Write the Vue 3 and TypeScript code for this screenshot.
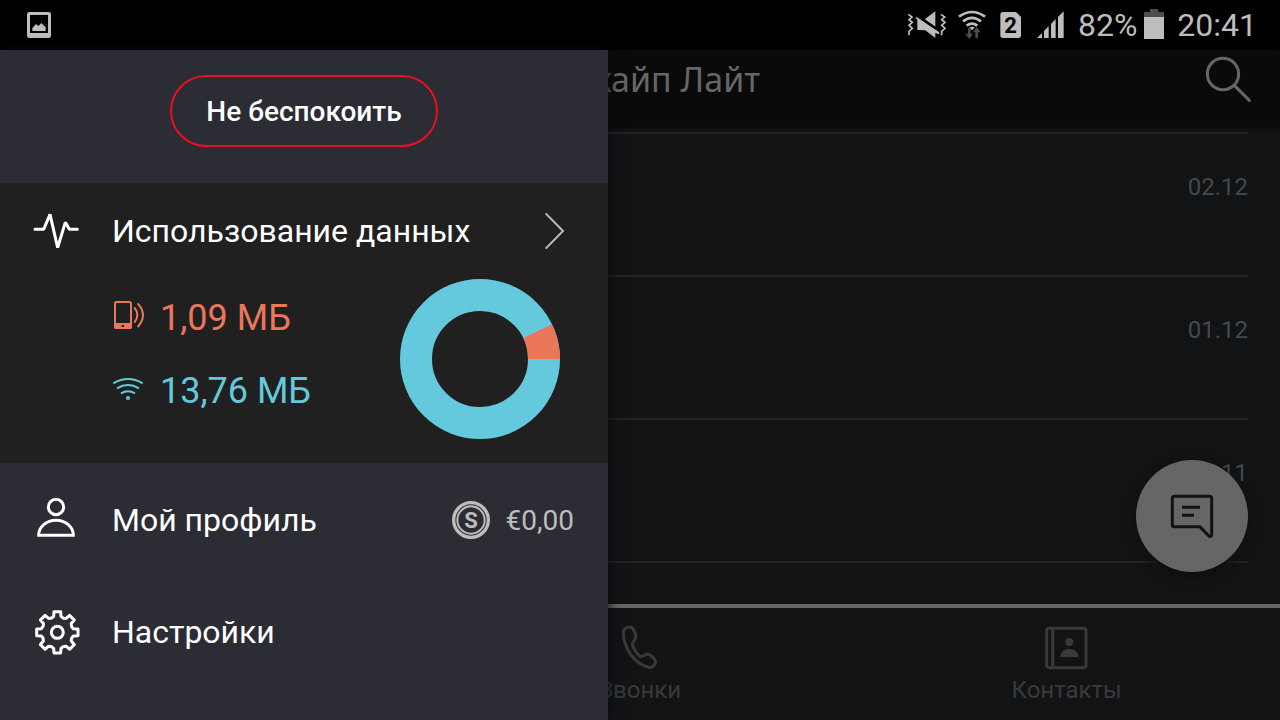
<script setup lang="ts">
interface Usage {
  id: 'mobile' | 'wifi'
  amount: number
  color: string
}

const usage: Usage[] = [
  { id: 'mobile', amount: 1.09, color: '#ea775a' },
  { id: 'wifi', amount: 13.76, color: '#64c9dc' },
]

const dates: string[] = ['02.12', '01.12', '30.11', '']

function formatAmount(value: number): string {
  return value.toFixed(2).replace('.', ',') + ' МБ'
}

// Ring of radius 64 with a 32 wide stroke, the mobile share ends at 3 o'clock.
const ringLength = 2 * Math.PI * 64
const total = usage.reduce((sum, item) => sum + item.amount, 0)
const mobileLength = (usage[0].amount / total) * ringLength
const mobileDash = `0 ${ringLength - mobileLength} ${mobileLength} 0`

// Eight-toothed cog outline around the origin.
function cogPath(): string {
  const tooth: [number, number][] = [
    [-17, -43],
    [-11, -48],
    [-10, -62],
    [10, -62],
    [11, -48],
  ]
  const points: string[] = []
  for (let i = 0; i < 8; i++) {
    const a = (i * Math.PI) / 4
    for (const [x, y] of tooth) {
      const px = x * Math.cos(a) - y * Math.sin(a)
      const py = x * Math.sin(a) + y * Math.cos(a)
      points.push(`${px.toFixed(1)} ${py.toFixed(1)}`)
    }
  }
  return `M${points.join('L')}Z`
}
const cog = cogPath()
</script>

<template>
  <div class="screen">
    <div class="status">
      <svg class="gallery" viewBox="81 36 72 78" aria-hidden="true">
        <path fill="#bdbdbd" fill-rule="evenodd" d="M88 36h58q7 0 7 7v64q0 7-7 7H88q-7 0-7-7V43q0-7 7-7zM90 45v54h54V45z" />
        <path fill="#bdbdbd" d="M97 93V84l11-12 7 6 9-9 13 13v11z" />
      </svg>
      <div class="indicators">
        <svg width="40" height="30" viewBox="48 30 120 90" aria-hidden="true">
          <g fill="none" stroke="#bdbdbd" stroke-width="5">
            <path d="M55 43l11 8-9 8 10 8-10 9 10 9-10 9 0 12" />
            <path d="M153 43l11 8-9 8 10 8-10 9 10 9-10 9 0 12" />
          </g>
          <path fill="#bdbdbd" d="M104 58l32-24v46zM82 90V61q0-4 4-4l63 42-4 4-9-5v16l-30-23zM76 54l4-3 68 46-4 5z" />
          <path stroke="#000" stroke-width="4" d="M92 53l52 35" />
        </svg>
        <svg width="28" height="30" viewBox="204 30 84 90" aria-hidden="true">
          <g fill="none" stroke="#bdbdbd" stroke-width="8">
            <path d="M207 50q39-28 78 0M219 64q27-21 54 0M230 77q16-12 32 0" />
          </g>
          <path fill="#bdbdbd" d="M238 83q8-6 16 0l-8 8z" />
          <path fill="#4d4d4d" d="M234 84h8v17h7l-11 16-13-16h9zM256 114v-17h-7l11-16 12 16h-8v17z" />
        </svg>
        <svg width="26" height="30" viewBox="324 30 78 90" aria-hidden="true">
          <path fill="#bdbdbd" d="M339 36h39l15 15v55q0 8-8 8h-46q-8 0-8-8V44q0-8 8-8z" />
          <text x="362" y="99" text-anchor="middle" class="sim">2</text>
        </svg>
        <svg width="30" height="30" viewBox="438 30 90 90" fill="#bdbdbd" aria-hidden="true">
          <path d="M441 114l15-15v15zM462 93l14-14v35h-14zM483 72l14-15v57h-14zM504 51l17-17v80h-17z" />
        </svg>
        <div class="charge">
          <span>82%</span>
          <svg width="22" height="32" viewBox="759 27 66 96" aria-hidden="true">
            <path fill="#4d4d4d" d="M780 27h24v9h18v17h-60V36h18z" />
            <path fill="#bdbdbd" d="M762 51h60v66h-60z" />
          </svg>
        </div>
        <time>20:41</time>
      </div>
    </div>

    <div class="body">
      <div class="page">
        <header class="header">
          <h1>Скайп Лайт</h1>
          <button class="plain" type="button" aria-label="Поиск">
            <svg width="48" height="48" viewBox="942 165 144 144" fill="none" stroke="#666" stroke-width="9">
              <circle cx="999" cy="222" r="47" />
              <path d="M1033 256l45 45" stroke-linecap="round" />
            </svg>
          </button>
        </header>

        <main class="chats">
          <ul>
            <li v-for="(date, i) in dates" :key="i">
              <time>{{ date }}</time>
            </li>
          </ul>
          <button class="fab" type="button" aria-label="Новый чат">
            <svg width="48" height="48" viewBox="204 156 144 144" fill="none" stroke="#111214" stroke-width="9">
              <path stroke-linejoin="round" d="M223 169h106q6 0 6 6v108q0 8-7 6L299 260h-76q-6 0-6-6v-79q0-6 6-6z" />
              <path d="M246 202h54M246 226h36" />
            </svg>
          </button>
        </main>

        <nav class="tabs">
          <a class="calls" href="#calls">
            <svg width="48" height="48" viewBox="78 192 144 144" fill="none" stroke="#38393a" stroke-width="9" stroke-linejoin="round">
              <path d="M107 205C113 201 122 200 127 204C133 211 139 226 137 234C136 241 127 246 127 252C128 262 142 284 150 289C157 292 165 282 174 283C181 284 192 294 196 302C199 308 192 318 185 322C178 325 163 318 151 311C131 299 113 275 105 249C100 235 100 219 101 213Q102 208 107 205Z" />
            </svg>
            <span>Звонки</span>
          </a>
          <a href="#contacts">
            <svg width="48" height="48" viewBox="188 132 144 144" fill="none" stroke="#38393a" stroke-width="9">
              <rect x="199" y="145" width="118" height="118" rx="7" />
              <path d="M217 145v118" />
              <g fill="#38393a" stroke="none">
                <circle cx="267" cy="186" r="12" />
                <path d="M240 231q2-24 27-24t27 24z" />
              </g>
            </svg>
            <span>Контакты</span>
          </a>
        </nav>
      </div>

      <aside class="drawer">
        <div class="presence">
          <button type="button">Не беспокоить</button>
        </div>

        <section class="usage">
          <a class="row" href="#usage">
            <svg width="48" height="48" viewBox="96 51 144 144" fill="none" stroke="#fff" stroke-width="9" stroke-linecap="round" stroke-linejoin="bevel">
              <path d="M105 118h26l19-45 23 100 23-76 12 21h24" />
            </svg>
            <span class="label">Использование данных</span>
            <svg class="chevron" width="24" height="48" viewBox="612 51 72 144" fill="none" stroke="#bdbdbd" stroke-width="6">
              <path d="M617 70l52 53-52 53" />
            </svg>
          </a>
          <div class="details">
            <ul>
              <li v-for="item in usage" :key="item.id" :class="item.id">
                <svg v-if="item.id === 'mobile'" width="32" height="32" viewBox="336 336 96 96" fill="none" stroke="currentColor" stroke-width="6" overflow="visible">
                  <rect x="345" y="336" width="48" height="78" rx="5" />
                  <path fill="currentColor" stroke="none" d="M342 399h54v12q0 6-6 6h-42q-6 0-6-6z" />
                  <path stroke="#202020" d="M365 408h7" />
                  <path d="M403 352q18 23 0 46M413 340q32 35 0 71" />
                </svg>
                <svg v-else width="32" height="32" viewBox="336 555 96 96" fill="none" stroke="currentColor" stroke-width="6">
                  <path d="M340 580q44-26 88 0M351 595q33-20 66 0M363 610q21-12 42 0" />
                  <circle cx="384" cy="624" r="6" fill="currentColor" stroke="none" />
                </svg>
                <span>{{ formatAmount(item.amount) }}</span>
              </li>
            </ul>
            <svg width="160" height="160" viewBox="-80 -80 160 160" fill="none" stroke-width="32" aria-hidden="true">
              <circle r="64" :stroke="usage[1].color" />
              <circle r="64" :stroke="usage[0].color" :stroke-dasharray="mobileDash" />
            </svg>
          </div>
        </section>

        <nav class="menu">
          <a class="row" href="#profile">
            <svg width="48" height="48" viewBox="96 78 144 144" fill="none" stroke="#fff" stroke-width="9">
              <circle cx="168" cy="111" r="23" />
              <path d="M116 196a52 45 0 0 1 104 0z" />
            </svg>
            <span class="label">Мой профиль</span>
            <span class="balance">
              <svg width="38" height="38" viewBox="66 63 114 114" fill="none" stroke="#bdbdbd" aria-hidden="true">
                <circle cx="123" cy="120" r="52" stroke-width="10" />
                <circle cx="123" cy="120" r="41" stroke-width="6" />
                <text x="123" y="143" text-anchor="middle" class="coin">S</text>
              </svg>
              €0,00
            </span>
          </a>
          <a class="row" href="#settings">
            <svg width="48" height="48" viewBox="96 414 144 144" fill="none" stroke="#fff" stroke-width="9" stroke-linejoin="round">
              <g transform="translate(172 487)">
                <path :d="cog" />
                <circle r="18" />
              </g>
            </svg>
            <span class="label">Настройки</span>
          </a>
        </nav>
      </aside>
    </div>
  </div>
</template>

<style>
html,
body {
  background: #000;
}
</style>

<style scoped>
.screen {
  display: flex;
  flex-direction: column;
  height: 100vh;
  overflow: hidden;
  background: #000;
  color: #fff;
  font-family: Roboto, "Liberation Sans", sans-serif;
}
ul {
  margin: 0;
  padding: 0;
  list-style: none;
}
a {
  color: inherit;
  text-decoration: none;
}
button {
  font: inherit;
  cursor: pointer;
}
svg {
  display: block;
  flex: none;
}

.status {
  display: flex;
  flex: none;
  align-items: center;
  justify-content: space-between;
  height: 50px;
  padding: 0 23px 0 27px;
  color: #bdbdbd;
  font-size: 32px;
}
.gallery {
  width: 24px;
  height: 26px;
}
.indicators {
  display: flex;
  align-items: center;
  gap: 12px;
}
.charge {
  display: flex;
  align-items: center;
  gap: 6px;
}
.sim {
  fill: #000;
  font-size: 66px;
  font-weight: 700;
}

.body {
  position: relative;
  flex: 1;
  min-height: 0;
}
.page {
  display: flex;
  flex-direction: column;
  height: 100%;
  background: #111315;
}
.header {
  display: flex;
  flex: none;
  align-items: center;
  justify-content: flex-end;
  height: 77px;
  box-sizing: border-box;
  padding: 0 28px 20px 128px;
  background: #0a0a0a;
  box-shadow: 0 1px 4px #0a0a0a;
  color: #666;
}
.header h1 {
  flex: 1;
  margin: 0;
  text-align: center;
  font: 400 34px/48px "Noto Sans", "Open Sans", sans-serif;
}
.plain {
  padding: 0;
  border: 0;
  background: none;
}

.chats {
  position: relative;
  flex: 1;
  min-height: 0;
  padding: 5px 32px 0;
}
.chats ul {
  height: 100%;
  overflow: hidden;
}
.chats li {
  height: 143px;
  box-sizing: border-box;
  padding-top: 39px;
  border-top: 2px solid #212325;
  color: #47484a;
  font-size: 24px;
  line-height: 28px;
  text-align: right;
}
.fab {
  position: absolute;
  right: 32px;
  bottom: 32px;
  display: grid;
  place-items: center;
  width: 112px;
  height: 112px;
  padding: 0;
  border: 0;
  border-radius: 50%;
  background: #666;
  box-shadow: 0 4px 12px #0d0e10;
}

.tabs {
  display: grid;
  flex: none;
  grid-template-columns: repeat(3, 1fr);
  padding: 16px 0;
  border-top: 4px solid #666;
  color: #38393a;
  font-size: 24px;
  line-height: 28px;
}
.tabs a {
  display: flex;
  flex-direction: column;
  align-items: center;
  gap: 4px;
}
.calls {
  grid-column: 2;
}

.drawer {
  position: absolute;
  top: 0;
  bottom: 0;
  left: 0;
  width: 47.5%;
  overflow: hidden;
  background: #2c2c34;
  box-shadow: 0 0 12px #0a0a0a;
}
.presence {
  display: flex;
  justify-content: center;
  padding: 25px 0 36px;
}
.presence button {
  height: 72px;
  padding: 0 34px;
  border: 2px solid #e81123;
  border-radius: 36px;
  background: none;
  color: #fff;
  font-size: 28px;
  font-weight: 500;
}
.row {
  display: flex;
  align-items: center;
  gap: 32px;
  height: 112px;
  padding: 0 34px 0 32px;
  font-size: 32px;
}
.label {
  flex: 1;
  white-space: nowrap;
}

.usage {
  background: #202020;
}
.usage .row {
  height: 96px;
  padding-right: 40px;
}
.details {
  display: flex;
  justify-content: space-between;
  padding: 0 48px 24px 112px;
}
.details ul {
  padding-top: 2px;
}
.details li {
  display: flex;
  align-items: center;
  gap: 16px;
  height: 73px;
  font-size: 36px;
  white-space: nowrap;
}
.mobile {
  color: #ea775a;
}
.wifi {
  color: #64c9dc;
}

.menu {
  padding-top: 1px;
}
.balance {
  display: flex;
  align-items: center;
  gap: 16px;
  color: #bdbdbd;
  font-size: 28px;
}
.coin {
  fill: #bdbdbd;
  stroke: none;
  font-size: 66px;
  font-weight: 700;
}
</style>
